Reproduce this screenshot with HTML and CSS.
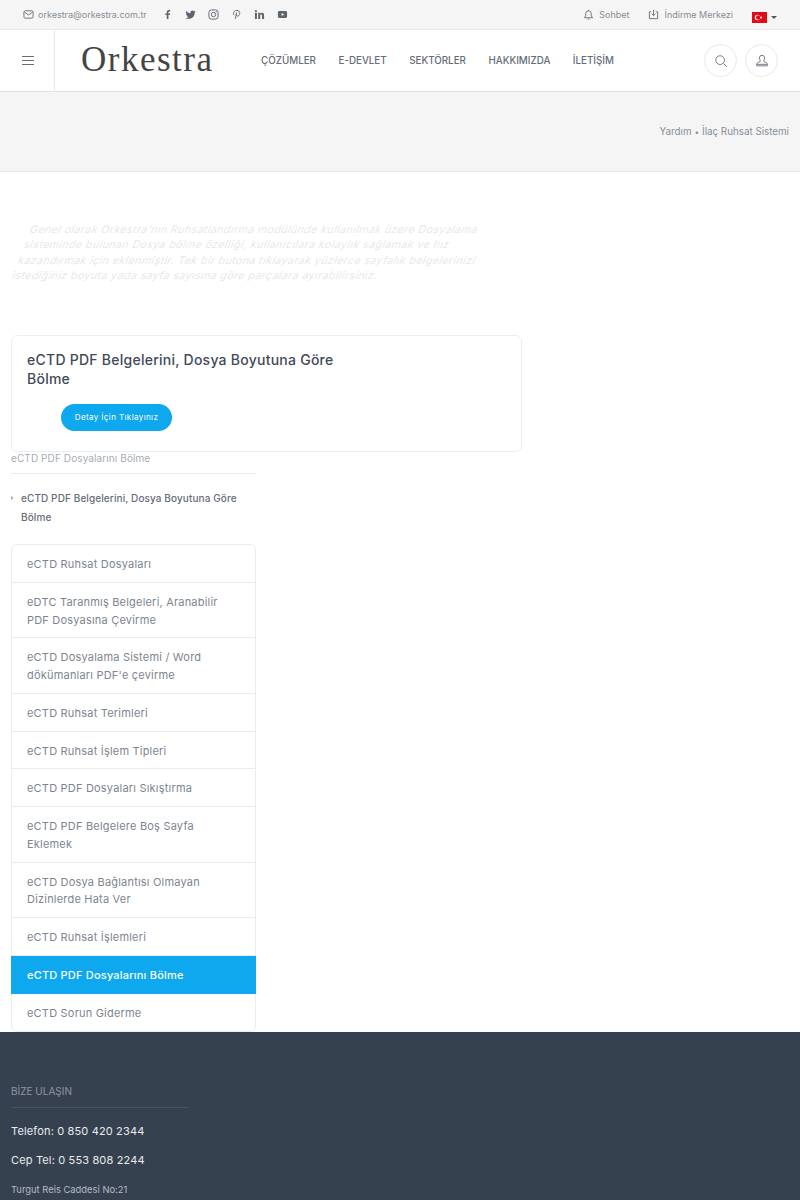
FILE: index.html
```html
<!DOCTYPE html>
<html lang="tr">
<head>
<meta charset="utf-8">
<title>eCTD PDF Dosyalarını Bölme</title>
<link rel="stylesheet" href="styles.css">
</head>
<body>
<div class="page">
<div class="topbar">
  <div class="top-left">
    <a class="mail"><svg class="i12" viewBox="0 0 12 12"><rect x="1" y="2" width="10" height="8" rx="1.5"/><path d="M1.5 3.5 6 6.5l4.5-3"/></svg>orkestra@orkestra.com.tr</a>
    <div class="socials">
      <svg viewBox="0 0 12 12"><path class="f" d="M7 11V6.6h1.6l.3-1.8H7V3.7c0-.6.2-.9.9-.9h1V1.2C8.700 1.100 8.200 1 7.600 1 6.200 1 5.200 1.900 5.200 3.400v1.400H3.600v1.800h1.600V11z"/></svg>
      <svg viewBox="0 0 12 12"><path class="f" d="M11.500 2.700c-.4.200-.8.300-1.300.4.500-.3.800-.7 1-1.300-.4.300-.9.500-1.400.6a2.300 2.300 0 0 0-3.900 2.100C4.100 4.400 2.400 3.500 1.300 2.100c-.6 1-.3 2.300.7 3-.4 0-.7-.1-1-.3 0 1.100.8 2.100 1.800 2.300-.3.100-.7.100-1 0 .3.900 1.100 1.600 2.100 1.600-1 .8-2.200 1.100-3.400 1 1 .7 2.200 1 3.500 1 4.200 0 6.600-3.500 6.500-6.700.4-.3.8-.8 1-1.300z"/></svg>
      <svg viewBox="0 0 12 12"><rect class="s" x="1" y="1" width="10" height="10" rx="2.800"/><circle class="s" cx="6" cy="6" r="2.400"/><circle class="f" cx="8.900" cy="3.100" r=".6"/></svg>
      <svg viewBox="0 0 12 12"><path class="s" d="M3.200 6.700C2 5 2.900 1.500 6.200 1.500c2.300 0 3.500 1.500 3.300 3.300-.2 1.900-1.300 3-2.500 2.900-.8-.1-1.300-.7-1.200-1.500M6.100 3.800 4.700 10.800"/></svg>
      <svg viewBox="0 0 12 12"><path class="f" d="M1 4.200h2.200V11H1zM2.100 1a1.200 1.200 0 1 1 0 2.400 1.200 1.200 0 0 1 0-2.400zM4.600 4.200h2.100v1c.4-.7 1.100-1.200 2.100-1.200C10.500 4 11 5.200 11 6.900V11H8.800V7.400c0-.8-.2-1.500-1-1.500-.9 0-1.100.7-1.100 1.500V11H4.600z"/></svg>
      <svg viewBox="0 0 12 12"><path class="f" fill-rule="evenodd" d="M2.500 2.200h7c.9 0 1.500.7 1.500 1.500v4.600c0 .8-.6 1.500-1.500 1.500h-7C1.600 9.800 1 9.100 1 8.300V3.700c0-.8.600-1.500 1.500-1.500zM5 4.300v3.400L8 6z"/></svg>
    </div>
  </div>
  <div class="top-right">
    <a class="tlink"><svg class="i12" viewBox="0 0 12 12"><path d="M1.500 9.500h9L9 7.500V5a3 3 0 0 0-6 0v2.500zM5 11h2M6 1v1"/></svg>Sohbet</a>
    <a class="tlink"><svg class="i12" viewBox="0 0 12 12"><path d="M3.500 3H1.500v7.500h9V3H8.500M6 1v6M4 5.200 6 7.200 8 5.200"/></svg>İndirme Merkezi</a>
    <span class="lang"><svg class="flag" viewBox="0 0 15 11"><rect width="15" height="11" fill="#e30a17"/><circle cx="5.500" cy="5.500" r="2.700" fill="#fff"/><circle cx="6.200" cy="5.500" r="2.200" fill="#e30a17"/><circle cx="9" cy="5.500" r="1" fill="#fff"/></svg><i class="caret"></i></span>
  </div>
</div>
<header class="header">
  <div class="burger"><span></span><span></span><span></span></div>
  <a class="logo">Orkestra</a>
  <nav class="nav"><a>ÇÖZÜMLER</a><a>E-DEVLET</a><a>SEKTÖRLER</a><a>HAKKIMIZDA</a><a>İLETİŞİM</a></nav>
  <div class="header-btns">
    <span class="round"><svg viewBox="0 0 16 16"><circle cx="7" cy="7" r="5"/><path d="m10.700 10.700 3.800 3.800"/></svg></span>
    <span class="round"><svg viewBox="0 0 16 16"><path d="M8 1.500a3 3 0 0 0-3 3c0 1.600 1 2.400 1 3.500 0 .8-.7 1.100-1.800 1.400-1.300.3-2.200.8-2.200 1.900v2.200h12v-2.200c0-1.100-.9-1.600-2.200-1.900C10.700 9.100 10 8.800 10 8c0-1.100 1-1.900 1-3.500a3 3 0 0 0-3-3zM2 11.800h12"/></svg></span>
  </div>
</header>
<div class="pagetitle"><span>Yardım</span><b>•</b><span>İlaç Ruhsat Sistemi</span></div>
<main class="main">
  <p class="intro">Genel olarak Orkestra'nın Ruhsatlandırma modülünde kullanılmak üzere Dosyalama<br>sisteminde bulunan Dosya bölme özelliği, kullanıcılara kolaylık sağlamak ve hız<br>kazandırmak için eklenmiştir. Tek bir butona tıklayarak yüzlerce sayfalık belgelerinizi<br>istediğiniz boyuta yada sayfa sayısına göre parçalara ayırabilirsiniz.</p>
  <section class="card">
    <h2>eCTD PDF Belgelerini, Dosya Boyutuna Göre Bölme</h2>
    <a class="btn">Detay İçin Tıklayınız</a>
  </section>
  <aside class="side">
    <div class="side-title">eCTD PDF Dosyalarını Bölme</div>
    <div class="side-item"><i class="tri"></i><a>eCTD PDF Belgelerini, Dosya Boyutuna Göre Bölme</a></div>
    <ul class="list">
      <li>eCTD Ruhsat Dosyaları</li>
      <li>eDTC Taranmış Belgeleri, Aranabilir PDF Dosyasına Çevirme</li>
      <li>eCTD Dosyalama Sistemi / Word dökümanları PDF'e çevirme</li>
      <li>eCTD Ruhsat Terimleri</li>
      <li>eCTD Ruhsat İşlem Tipleri</li>
      <li>eCTD PDF Dosyaları Sıkıştırma</li>
      <li>eCTD PDF Belgelere Boş Sayfa Eklemek</li>
      <li>eCTD Dosya Bağlantısı Olmayan Dizinlerde Hata Ver</li>
      <li>eCTD Ruhsat İşlemleri</li>
      <li class="active">eCTD PDF Dosyalarını Bölme</li>
      <li>eCTD Sorun Giderme</li>
    </ul>
  </aside>
</main>
<footer class="footer">
  <div class="foot-title">BİZE ULAŞIN</div>
  <div class="foot-line">Telefon: 0 850 420 2344</div>
  <div class="foot-line">Cep Tel: 0 553 808 2244</div>
  <div class="foot-small">Turgut Reis Caddesi No:21</div>
</footer>
</div>
</body>
</html>
```
FILE: styles.css
```css
* { box-sizing: border-box; }
html, body { margin: 0; padding: 0; }
body { font-family: "Inter", "Noto Sans", sans-serif; color: #6c757d; background: #fff; }
.page { height: 1200px; overflow: hidden; }
svg { display: block; fill: none; stroke: #666d78; stroke-width: 1; }

.topbar { height: 30px; background: #f5f5f5; border-bottom: 1px solid #e9e9e9; display: flex; justify-content: space-between; padding: 0 9px 1px 23px; font-size: 9px; color: #868d97; }
.top-left, .top-right, .mail, .tlink, .socials, .lang { display: flex; align-items: center; }
.mail { gap: 4px; }
.i12 { width: 11px; height: 11px; }
.socials { margin-left: 15px; gap: 12px; }
.socials svg { width: 11px; height: 11px; }
.socials .f { fill: #5d6470; stroke: none; }
.socials .s { fill: none; stroke: #5d6470; }
.top-right { padding-right: 14px; }
.tlink { gap: 5px; margin-right: 19px; }
.tlink:first-child { margin-right: 19px; }
.lang { gap: 4px; margin-top: 7px; }
.flag { width: 15px; height: 11px; stroke: none; }
.caret { width: 0; height: 0; border: 3px solid transparent; border-top: 3px solid #555; border-bottom: 0; }

.header { height: 62px; background: #fff; border-bottom: 1px solid #e3e3e3; display: flex; align-items: stretch; }
.burger { width: 55px; border-right: 1px solid #e9e9e9; display: flex; flex-direction: column; justify-content: center; align-items: center; gap: 2.700px; padding-left: 1px; }
.burger span { display: block; width: 12px; height: 1.500px; background: #666d78; }
.logo { width: 206px; padding-left: 26px; font-family: "Liberation Serif", serif; font-size: 35px; letter-spacing: 1.500px; line-height: 60px; color: #444; }
.nav { display: flex; align-items: center; gap: 22.500px; font-size: 9.800px; font-weight: 500; color: #666d78; }
.header-btns { margin-left: auto; margin-right: 22px; display: flex; align-items: center; gap: 8px; }
.round { width: 33px; height: 33px; border: 1px solid #e9e9e9; border-radius: 50%; display: flex; align-items: center; justify-content: center; }
.round svg { width: 14px; height: 14px; }

.pagetitle { height: 80px; background: #f5f5f5; border-bottom: 1px solid #e6e6e6; display: flex; justify-content: flex-end; align-items: center; gap: 3px; padding-right: 11px; font-size: 9.800px; color: #868d97; }
.pagetitle b { font-weight: 400; font-size: 8px; }

.main { padding: 0 11px; height: 860px; }
.intro { margin: 0; padding-top: 50px; height: 163px; width: 511px; font-size: 10.500px; letter-spacing: .47px; line-height: 15.400px; color: #e8e8e8; transform: skewX(-21deg) translateX(10px); white-space: nowrap; }
.card { width: 511px; height: 117px; border: 1px solid #eceff2; border-radius: 6px; padding: 14px 15px; }
.card h2 { margin: 0; width: 325px; font-size: 14px; letter-spacing: .25px; line-height: 19px; font-weight: 500; color: #3f4a58; }
.btn { display: block; width: 111px; height: 27px; margin: 16px 0 0 34px; border-radius: 14px; background: #0ea8ee; color: #fff; font-size: 8px; letter-spacing: .4px; line-height: 27px; text-align: center; }
.side { width: 245px; }
.side-title { height: 22px; border-bottom: 1px solid #e9ecef; font-size: 10px; letter-spacing: .1px; line-height: 13px; color: #a5acb6; }
.side-item { display: flex; padding-top: 15px; font-size: 10px; letter-spacing: .1px; line-height: 19px; font-weight: 500; color: #666d78; }
.side-item a { padding-left: 7px; flex: 1; }
.tri { margin-top: 7px; width: 0; height: 0; border: 2.500px solid transparent; border-left: 3px solid #adb3bb; border-right: 0; }
.list { list-style: none; margin: 17px 0 0; padding: 0; border: 1px solid #e9ecef; border-radius: 6px; font-size: 11px; letter-spacing: .2px; line-height: 17.700px; color: #7d858f; }
.list li { padding: 11px 15px 8.100px; border-bottom: 1px solid #e9ecef; }
.list li:last-child { border-bottom: 0; }
.list .active { background: #0ea8ee; color: #fff; font-weight: 500; margin: 0 -1px; padding: 11px 16px 9.100px; border-bottom: 0; }

.footer { background: #36414f; height: 168px; padding: 52px 11px 0; color: #e9ecef; }
.foot-title { width: 178px; height: 24px; margin-bottom: 9px; font-size: 10px; line-height: 15px; color: #8d96a2; border-bottom: 1px solid #465160; }
.foot-line { font-size: 11px; letter-spacing: .15px; line-height: 29px; }
.foot-small { font-size: 9.400px; line-height: 29px; color: #b5bcc5; }
```
